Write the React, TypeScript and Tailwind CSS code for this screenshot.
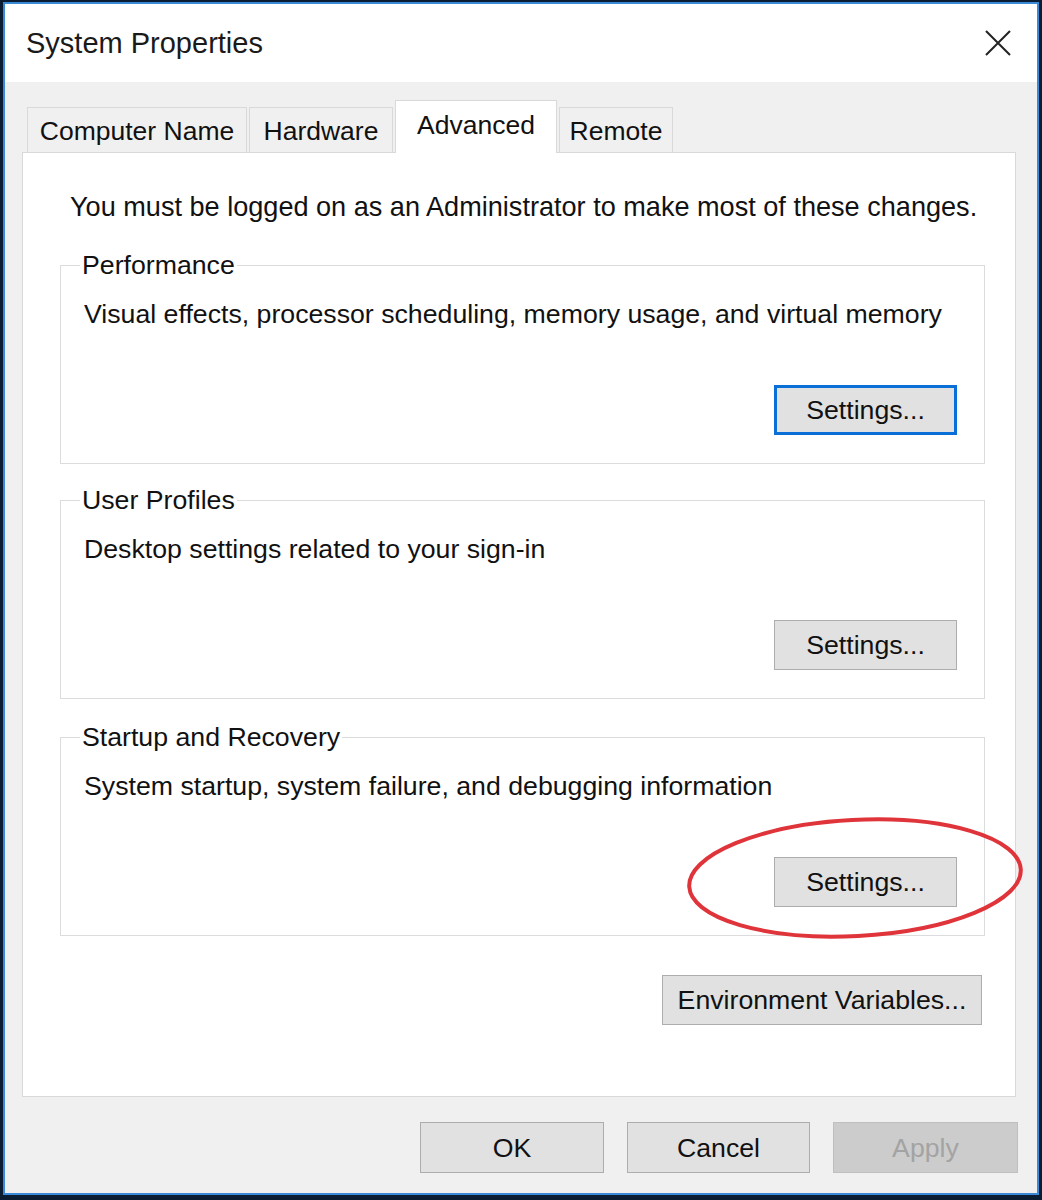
import React from 'react';

const tabs = [
  { label: 'Computer Name', width: 'w-[220px]' },
  { label: 'Hardware', width: 'w-[144px]' },
  { label: 'Advanced', width: 'w-[162px]', active: true },
  { label: 'Remote', width: 'w-[114px]' },
];

const groups = [
  {
    title: 'Performance',
    text: 'Visual effects, processor scheduling, memory usage, and virtual memory',
    focused: true,
    gap: 'mt-0',
  },
  { title: 'User Profiles', text: 'Desktop settings related to your sign-in', gap: 'mt-[20px]' },
  {
    title: 'Startup and Recovery',
    text: 'System startup, system failure, and debugging information',
    gap: 'mt-[22px]',
  },
];

const font = "font-['Liberation_Sans',Arial,sans-serif]";

const WinButton = ({
  label,
  className = '',
  focused = false,
  disabled = false,
}: {
  label: string;
  className?: string;
  focused?: boolean;
  disabled?: boolean;
}) => (
  <button
    className={`flex h-[50px] items-center justify-center text-[26.7px] leading-[32px] ${
      focused
        ? 'border-[3px] border-[#0a6fd6] bg-[#e1e1e1] text-[#111]'
        : disabled
        ? 'border border-[#bfbfbf] bg-[#cccccc] text-[#a3a3a3]'
        : 'border border-[#adadad] bg-[#e1e1e1] text-[#111]'
    } ${className}`}
  >
    {label}
  </button>
);

const Group = ({
  title,
  text,
  focused,
  gap,
}: {
  title: string;
  text: string;
  focused?: boolean;
  gap: string;
}) => (
  <fieldset className={`${gap} mr-[30px] ml-[37px] border border-[#dcdcdc] pr-[27px] pb-[28px] pl-[23px]`}>
    <legend className="-ml-[4px] px-[2px] text-[26.7px] leading-[32px] text-[#111]">{title}</legend>
    <p className="mt-[17px] text-[26.7px] leading-[32px] text-[#111]">{text}</p>
    <div className="mt-[55px] flex justify-end">
      <WinButton label="Settings..." focused={focused} className="w-[183px]" />
    </div>
  </fieldset>
);

export default function App() {
  return (
    <div className={`relative h-[1200px] w-[1042px] bg-[#0b1d33] pt-[2px] pr-[3px] pb-[5px] pl-[3px] ${font}`}>
      <div className="flex h-full flex-col border-2 border-[#3a8ad8] bg-[#f0f0f0]">
        {/* title bar */}
        <div className="flex h-[78px] items-center justify-between bg-white pr-[25px] pl-[21px]">
          <span className="text-[29px] leading-[34px] text-[#1a1a1a]">System Properties</span>
          <svg width="28" height="28" viewBox="0 0 28 28">
            <path d="M2 2 L26 26 M26 2 L2 26" stroke="#222" strokeWidth="2" fill="none" />
          </svg>
        </div>

        <div className="flex flex-1 flex-col pt-[18px] pr-[21px] pl-[17px]">
          {/* tabs */}
          <div className="flex h-[52px] items-end gap-[2px] pl-[5px]">
            {tabs.map((tab) =>
              tab.active ? (
                <div
                  key={tab.label}
                  className={`relative z-10 -mb-px flex h-[53px] ${tab.width} items-start justify-center border border-b-0 border-[#d9d9d9] bg-white pt-[8px] text-[26.5px] leading-[32px] text-[#111]`}
                >
                  {tab.label}
                </div>
              ) : (
                <div
                  key={tab.label}
                  className={`flex h-[45px] ${tab.width} items-center justify-center border border-b-0 border-[#d9d9d9] bg-[#f0f0f0] pt-[2px] text-[26.5px] leading-[32px] text-[#111]`}
                >
                  {tab.label}
                </div>
              )
            )}
          </div>

          {/* tab panel */}
          <div className="flex h-[945px] w-[994px] flex-col border border-[#d9d9d9] bg-white">
            <p className="mt-[38px] mb-[26px] pl-[47px] text-[27.1px] leading-[32px] text-[#111]">
              You must be logged on as an Administrator to make most of these changes.
            </p>
            <div className="flex flex-col">
              {groups.map((g) => (
                <Group key={g.title} title={g.title} text={g.text} focused={g.focused} gap={g.gap} />
              ))}
            </div>
            <div className="mt-[39px] flex justify-end pr-[33px]">
              <WinButton label="Environment Variables..." className="w-[320px]" />
            </div>
          </div>

          {/* dialog buttons */}
          <div className="mt-[25px] -mr-[2px] flex justify-end gap-[23px]">
            <WinButton label="OK" className="h-[51px] w-[184px]" />
            <WinButton label="Cancel" className="h-[51px] w-[183px]" />
            <WinButton label="Apply" disabled className="h-[51px] w-[185px]" />
          </div>
        </div>
      </div>

      {/* red annotation ring */}
      <svg className="pointer-events-none absolute top-[810px] left-[680px]" width="350" height="140" viewBox="0 0 350 140">
        <ellipse
          cx="175"
          cy="68"
          rx="166"
          ry="58"
          transform="rotate(-3 175 68)"
          fill="none"
          stroke="#e0343b"
          strokeWidth="4"
        />
      </svg>
    </div>
  );
}
